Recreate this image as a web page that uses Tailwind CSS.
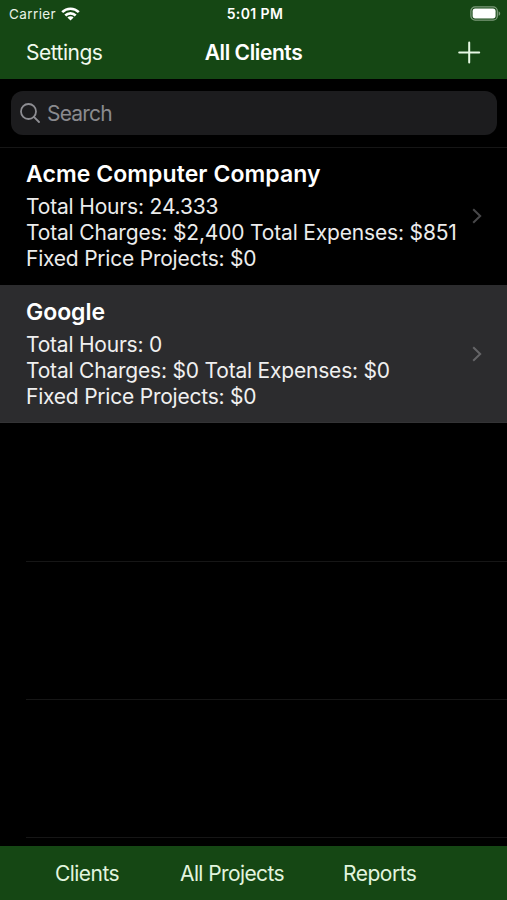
<!DOCTYPE html>
<html lang="en">
<head>
    <meta charset="UTF-8">
    <meta name="viewport" content="width=device-width, initial-scale=1.0">
    <title>All Clients</title>
    <script src="https://cdn.jsdelivr.net/npm/@tailwindcss/browser@4"></script>
</head>
<body class="bg-black">
    <div class="w-[507px] h-[900px] flex flex-col overflow-hidden bg-black text-white font-['Inter',sans-serif] whitespace-nowrap">
        <header class="h-[79px] shrink-0 bg-[#154714]">
            <!-- Status bar -->
            <div class="h-[27px] grid grid-cols-3 items-center pl-[9px] pr-[6px] text-[13.5px]">
                <div class="flex items-center gap-[5px] text-[#e9f3e6]">
                    <span class="pt-[2px] tracking-[0.4px]">Carrier</span>
                    <svg class="w-[19px] h-[14px]" viewBox="0 0 19 14" fill="none" stroke="#fff" stroke-width="2.6">
                        <path d="M1.2 5.1a11.8 11.8 0 0 1 16.6 0"/>
                        <path d="M4.3 8.5a7.4 7.4 0 0 1 10.4 0"/>
                        <path d="M9.5 13.6L6.4 10.6a4.4 4.4 0 0 1 6.2 0z" fill="#fff" stroke="none"/>
                    </svg>
                </div>
                <span class="text-center text-[14px] leading-[20px] font-semibold tracking-[0.4px]">5:01 PM</span>
                <svg class="w-[31px] h-[15px] justify-self-end" viewBox="0 0 31 15">
                    <rect x="0.9" y="0.9" width="26.4" height="13.2" rx="4.2" fill="none" stroke="#7c9b7a" stroke-width="1.3"/>
                    <rect x="2.6" y="2.6" width="23" height="9.8" rx="2.6" fill="#fff"/>
                    <path d="M28.6 5.2v4.6c1-.4 1.6-1.3 1.6-2.3s-.6-1.9-1.6-2.3z" fill="#7c9b7a"/>
                </svg>
            </div>
            <!-- Navigation bar -->
            <div class="h-[50px] grid grid-cols-3 items-center px-[26px] text-[21px]">
                <span class="pt-[2px] text-[#f1f9ee] tracking-[-0.5px]">Settings</span>
                <span class="pt-[2px] text-center font-semibold tracking-[-0.4px]">All Clients</span>
                <svg class="w-[23px] h-[23px] justify-self-end" viewBox="0 0 23 23" stroke="#e6f8e4" stroke-width="2" stroke-linecap="round">
                    <path d="M11.2 1.5v20M1.2 11.5h20"/>
                </svg>
            </div>
        </header>

        <!-- Search -->
        <div class="h-[69px] shrink-0 pt-[12px] pl-[11px] pr-[10px] border-b border-[#161616]">
            <div class="h-[44px] flex items-center gap-[7px] pl-[9px] rounded-[12px] bg-[#1c1c1e] text-[#8a8a8e] text-[21px]">
                <svg class="w-[20px] h-[20px]" viewBox="0 0 20 20" fill="none" stroke="#8e8e93" stroke-width="1.8" stroke-linecap="round">
                    <circle cx="8.5" cy="8.5" r="7.5"/>
                    <path d="M13.9 13.9l5.1 5.1"/>
                </svg>
                <span class="pt-[2px] tracking-[-0.8px]">Search</span>
            </div>
        </div>

        <!-- Client list -->
        <main class="grow overflow-hidden">
            <div class="h-[137px] flex items-center justify-between pb-[2px] pl-[26px] pr-[25px]">
                <div class="text-[21px] leading-[26px] text-[#ececec]">
                    <h2 class="text-[23px] leading-[30px] mb-[5px] font-semibold text-white"><span class="tracking-[0.07px]">Acme Computer Company</span></h2>
                    <p><span class="tracking-[-0.17px]">Total Hours: 24.333</span></p>
                    <p><span class="tracking-[-0.17px]">Total Charges: $2,400 Total Expenses: $851</span></p>
                    <p><span class="tracking-[-0.22px]">Fixed Price Projects: $0</span></p>
                </div>
                <svg class="w-[10px] h-[16px]" viewBox="0 0 10 16" fill="none" stroke="#48484a" stroke-width="2">
                    <path d="M1.2 1.2L8.2 8l-7 6.8"/>
                </svg>
            </div>
            <div class="h-[138px] flex items-center justify-between pb-[1px] pl-[26px] pr-[25px] bg-[#2c2c2e] border-b border-[#333335]">
                <div class="text-[21px] leading-[26px] text-[#f0f0f0]">
                    <h2 class="text-[23px] leading-[30px] mb-[5px] font-semibold text-white"><span class="tracking-[-0.05px]">Google</span></h2>
                    <p><span class="tracking-[-0.22px]">Total Hours: 0</span></p>
                    <p><span class="tracking-[-0.2px]">Total Charges: $0 Total Expenses: $0</span></p>
                    <p><span class="tracking-[-0.22px]">Fixed Price Projects: $0</span></p>
                </div>
                <svg class="w-[10px] h-[16px] mt-[2px]" viewBox="0 0 10 16" fill="none" stroke="#656567" stroke-width="2">
                    <path d="M1.2 1.2L8.2 8l-7 6.8"/>
                </svg>
            </div>
            <div class="h-[139px] ml-[26px] border-b border-[#161616]"></div>
            <div class="h-[138px] ml-[26px] border-b border-[#161616]"></div>
            <div class="h-[138px] ml-[26px] border-b border-[#161616]"></div>
        </main>

        <!-- Toolbar -->
        <footer class="h-[54px] shrink-0 flex items-center pt-[2px] pl-[55px] bg-[#154714] text-[21px] text-[#e2f5df]">
            <span class="w-[125px] tracking-[-0.55px]">Clients</span>
            <span class="w-[163px] tracking-[-0.6px]">All Projects</span>
            <span class="tracking-[-0.5px]">Reports</span>
        </footer>
    </div>
</body>
</html>
